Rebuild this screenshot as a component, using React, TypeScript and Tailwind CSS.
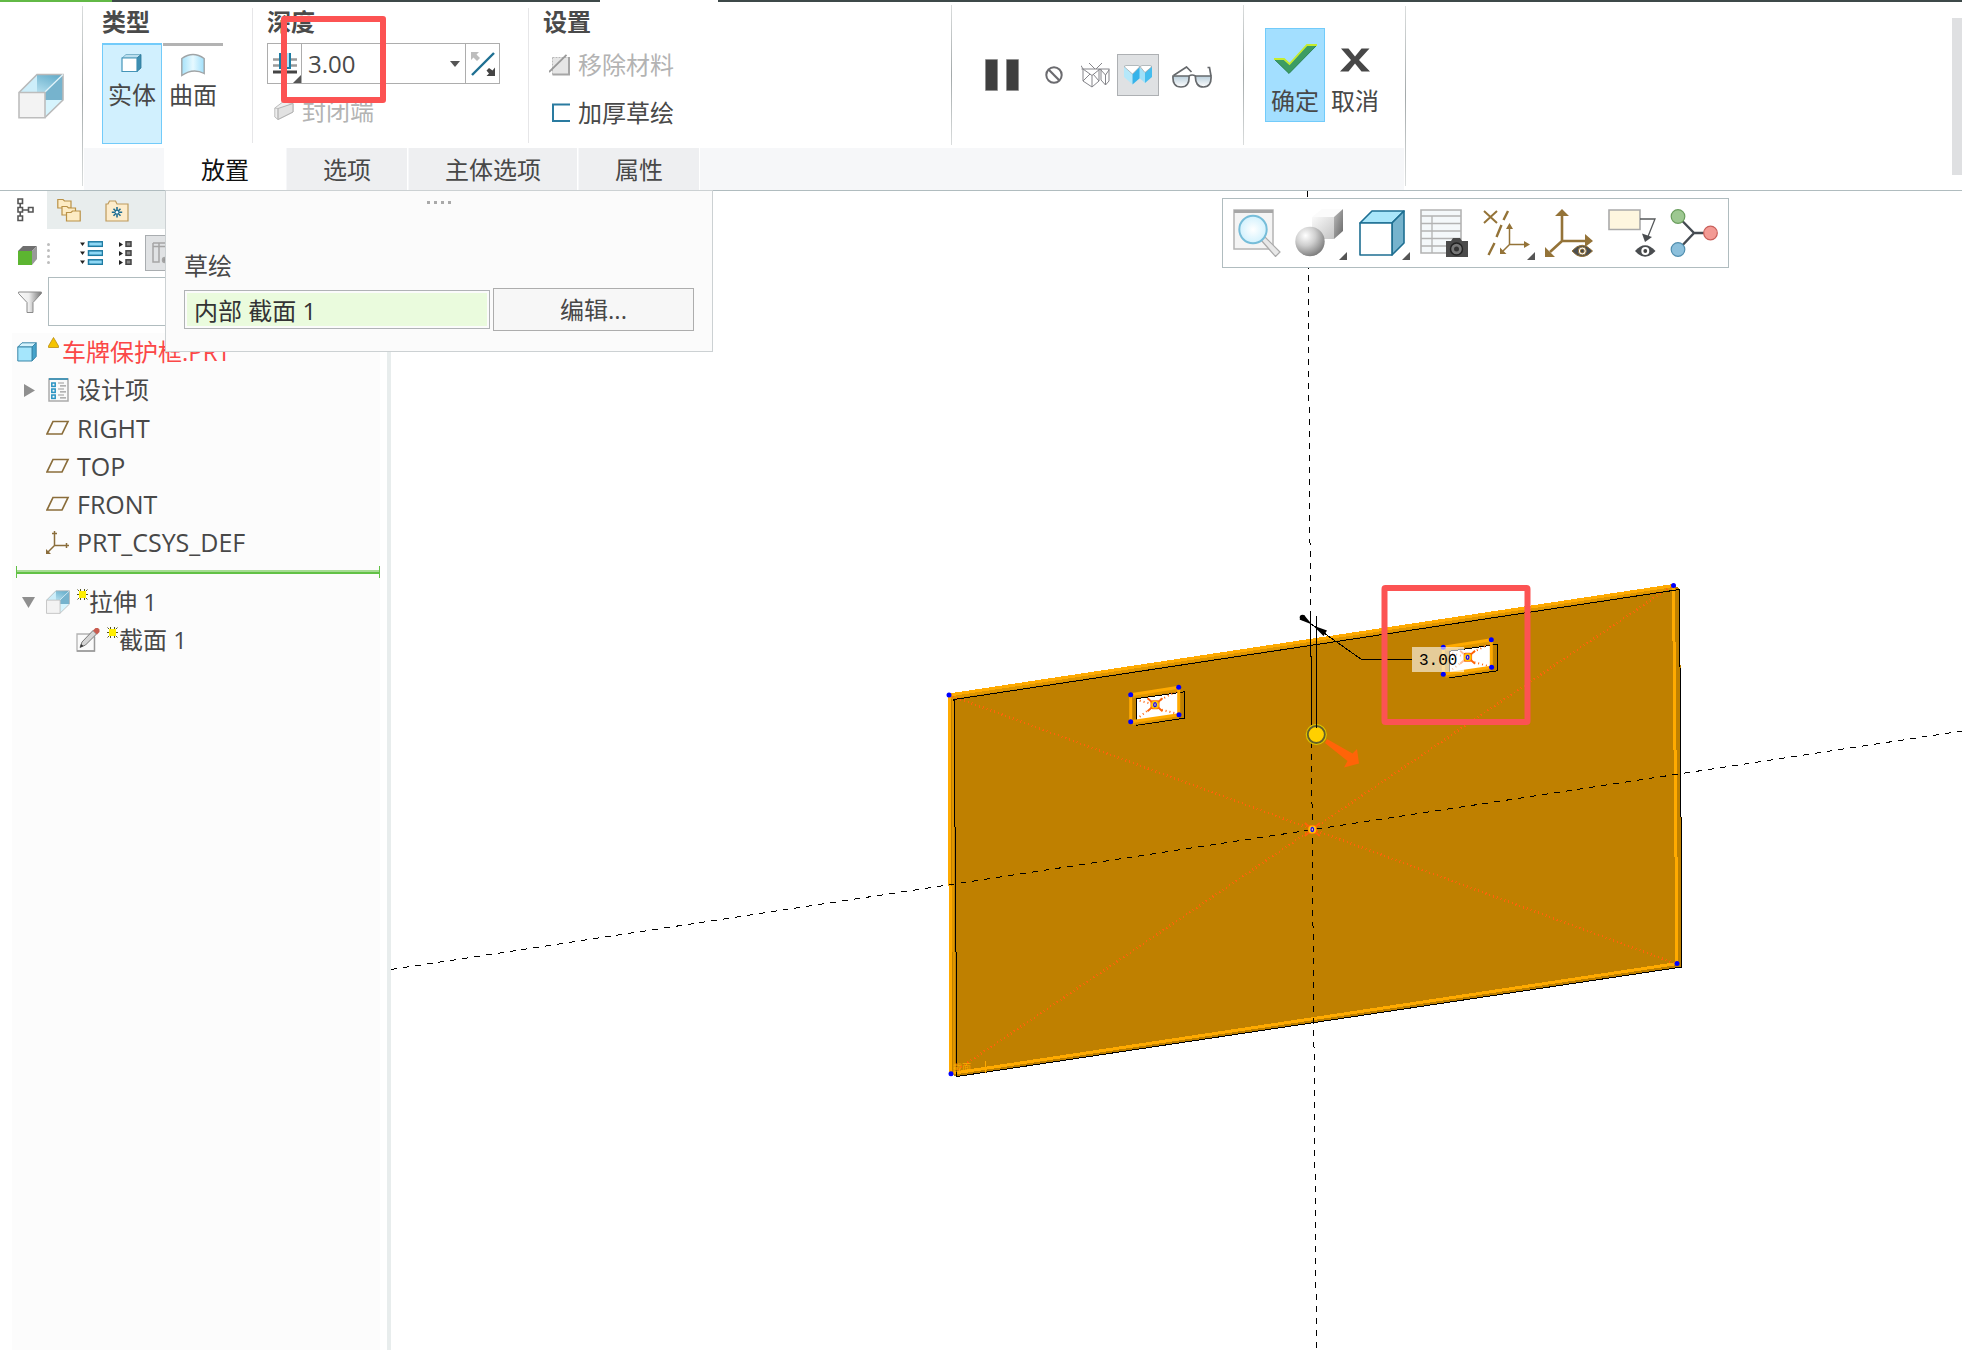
import React from "react";

type IconProps = { className?: string };

/* ---------- ribbon icons ---------- */

const ExtrudeIcon = ({ className }: IconProps) => (
  <svg className={className} viewBox="0 0 46 46" fill="none">
    <defs>
      <linearGradient id="exTop" x1="0" y1="1" x2="1" y2="0">
        <stop offset="0" stopColor="#c9ecf8" />
        <stop offset="1" stopColor="#5ba7c6" />
      </linearGradient>
    </defs>
    <path d="M1.500 19 19 1.500H45L27 19Z" fill="url(#exTop)" />
    <path d="M19 1.500V19H1.500Z" fill="#cdeefa" />
    <path d="M27 19 45 1.500V27H27Z" fill="#76b3cd" />
    <path d="M27 27H45L27 44.500Z" fill="#d6f4fd" />
    <path d="M1.500 19 19 1.500H45V27L27 44.500" stroke="#b9b9b9" strokeWidth="1.600" />
    <path d="M27 19 45 1.500" stroke="#e4f4fa" strokeWidth="1.200" />
    <path d="M1 19.500H27V44.800H1Z" fill="#f3f3f3" stroke="#bdbdbd" strokeWidth="1.600" />
  </svg>
);

const SolidIcon = () => (
  <svg className="h-5 w-6" viewBox="0 0 24 20" fill="none">
    <path d="M2 5 6 1.500H21L17 5Z" fill="#bcdfee" stroke="#6aa6c0" strokeWidth=".8" />
    <path d="M17 5 21 1.500V15L17 18.500Z" fill="#3f8fb2" stroke="#2a7697" strokeWidth=".8" />
    <path d="M2 5H17V18.500H2Z" fill="#fff" stroke="#4595b8" strokeWidth="1.200" />
  </svg>
);

const SurfaceIcon = () => (
  <svg className="h-6 w-6" viewBox="0 0 24 24" fill="none">
    <defs>
      <linearGradient id="surf" x1="0" y1="0" x2="1" y2="0">
        <stop offset="0" stopColor="#a6e2fa" />
        <stop offset="0.500" stopColor="#e6f9ff" />
        <stop offset="1" stopColor="#9fdffb" />
      </linearGradient>
    </defs>
    <path d="M.8 5.500Q12-2.500 23.200 5.500V20.500Q12 14.500.8 22.500Z" fill="url(#surf)" stroke="#a0a4a6" strokeWidth="1.400" />
  </svg>
);

const SymmetricDepthIcon = () => (
  <svg className="h-6 w-6" viewBox="0 0 24 24" fill="none">
    <path d="M0 7.500H24M0 13.500H24" stroke="#9a9a9a" strokeWidth="2.400" />
    <path d="M6 1H18V16H6Z" fill="#a8e4fb" />
    <path d="M7 1V16H17V1" stroke="#1c7ca3" strokeWidth="2" />
    <path d="M0 20H24" stroke="#444" strokeWidth="3" />
  </svg>
);

const FlipIcon = () => (
  <svg className="h-6 w-6" viewBox="0 0 24 24" fill="none">
    <path d="M1 23 23 1" stroke="#1e6f92" strokeWidth="2.400" />
    <path d="M0 0H8L5.500 2.500 9 6 6 9 2.500 5.500 0 8Z" fill="#bdbdbd" />
    <path d="M24 24H15.500L18 21.500 15.500 18.500 18 16 21.500 18.500 24 15.500Z" fill="#444" />
  </svg>
);

const CapIcon = () => (
  <svg className="h-5 w-5" viewBox="0 0 20 20" fill="none" stroke="#bdbdbd">
    <path d="M.8 7 9 .8 19 2.500V11L4 18.500.8 16Z" fill="#eee" />
    <path d="M4 7.500 19 2.500V11L4 18.500Z" fill="#e2e2e2" stroke="#b3b3b3" />
    <path d="M.8 7 4 7.500V18.500" />
  </svg>
);

const RemoveMaterialIcon = () => (
  <svg className="h-[22px] w-[22px]" viewBox="0 0 22 22" fill="none">
    <path d="M3.500 3.500H20.500V20.500H3.500Z" fill="#e6e6e6" stroke="#b9b9b9" strokeDasharray="2 1" />
    <path d="M20 3V20.500H3.500" stroke="#a6a6a6" strokeWidth="2" />
    <path d="M0 18 17.500.8" stroke="#999" strokeWidth="1.800" />
  </svg>
);

const ThickenIcon = () => (
  <svg className="h-[22px] w-[22px]" viewBox="0 0 22 22" fill="none">
    <path d="M21 2.500H4V19H21" stroke="#2a7ba0" strokeWidth="2" />
  </svg>
);

const PauseIcon = () => (
  <svg className="h-8 w-[34px]" viewBox="0 0 34 32">
    <path d="M.5.5H12.500V31.500H.5ZM21.500.5H33.500V31.500H21.500Z" fill="#3f3f3f" stroke="#8a8a8a" strokeWidth=".6" />
  </svg>
);

const NoPreviewIcon = () => (
  <svg className="h-[18px] w-[18px]" viewBox="0 0 18 18" fill="none" stroke="#6b6b6f">
    <circle cx="9" cy="9" r="7.700" strokeWidth="2" />
    <path d="M3.800 3.800 14.200 14.200" strokeWidth="2.200" />
  </svg>
);

const WireIcon = () => (
  <svg className="h-[25px] w-[29px]" viewBox="0 0 29 25" fill="none" stroke="#85858a" strokeWidth="1">
    <path d="M.5 6H28.500M2 6V18L11 24 18 18M28 6V18L24.500 22 20 17M2 6 11 12.500 19 6M19 6 24.500 12 28 7M11 12.500V24M18 6V18M24.500 12V22M20 6V17M8 0 14 6M21 0 15 6M0 2.500 2 6M2 18 9 11M18 18 12 11" />
  </svg>
);

const ShadedIcon = () => (
  <svg className="h-5 w-[28px]" viewBox="0 0 28 20">
    <path d="M0 1V12L8.500 19.500V9Z" fill="#b5e8fa" />
    <path d="M8.500 9 16 1V13L8.500 19.500Z" fill="#35b3ea" />
    <path d="M15.500 2V13L21 18V7Z" fill="#9fe0f8" />
    <path d="M21 7 28 1V12L21 18Z" fill="#45bdee" />
    <path d="M0 1.500 2 .5H14L16 1.500 8.500 9ZM16 1.500 18 .5H26L28 1.500 21 7.500Z" fill="#fff" stroke="#9aa2a6" strokeWidth=".7" />
  </svg>
);

const GlassesIcon = () => (
  <svg className="h-[22px] w-10" viewBox="0 0 40 22" fill="none" stroke="#66696c" strokeWidth="1.700">
    <defs>
      <linearGradient id="lens" x1="0" y1="0" x2="0" y2="1">
        <stop offset="0" stopColor="#b9cedb" />
        <stop offset="1" stopColor="#fff" />
      </linearGradient>
    </defs>
    <path d="M1 10H17C17.500 17 15 21 9 21S.5 17 1 10ZM23.500 10H39C39.500 17 37 21 31.500 21S23 17 23.500 10Z" fill="url(#lens)" />
    <path d="M17 10Q20 8 23.500 10M1.500 9.500 14.500 1 19.500 6M39 10 37.500 1.500H35.500" />
  </svg>
);

const CheckIcon = () => (
  <svg className="h-[30px] w-[43px]" viewBox="0 0 43 30">
    <path d="M0 15H10L15.500 20 33 1H43L15 29.500Z" fill="#3c9c63" stroke="#1f7a45" strokeWidth=".8" />
    <path d="M0 15H10L15.500 20 33 1H43" fill="none" stroke="#c6ec2f" strokeWidth="1.800" />
  </svg>
);

const CrossIcon = () => (
  <svg className="h-6 w-[30px]" viewBox="0 0 30 24">
    <path d="M1 .5H8.500L15 8.500 21.500.5H29.500L19 12 30 23.500H21.500L15 15.500 8.500 23.500H0L11 12Z" fill="#474747" />
  </svg>
);

const Corner = ({ className }: IconProps) => (
  <svg className={className} viewBox="0 0 8 8">
    <path d="M8 0V8H0Z" fill="#555" />
  </svg>
);

/* ---------- model tree icons ---------- */

const TreeTabIcon = () => (
  <svg className="h-6 w-[17px]" viewBox="0 0 17 24" fill="none" stroke="#555" strokeWidth="1.600">
    <path d="M1 1H5.500V5.500H1ZM1 9.500H5.500V14H1ZM1 18H5.500V22.500H1ZM11.500 9.500H16V14H11.500ZM3.200 5.500V9.500M3.200 14V18M5.500 12H11.500" />
  </svg>
);

const FoldersIcon = () => (
  <svg className="h-6 w-6" viewBox="0 0 24 24" fill="#fdecc4" stroke="#b99146" strokeWidth="1.200">
    <path d="M.8 10V1.500H6L7.500 3H14V10Z" />
    <path d="M5 17V8.500H10L11.500 10H18.500V17Z" />
    <path d="M9.500 23V14.500H14L15.500 13H23.200V23Z" />
  </svg>
);

const FavoritesIcon = () => (
  <svg className="h-[22px] w-6" viewBox="0 0 24 22" fill="none">
    <path d="M1 21V4H3L4.500 1H10.500L12 4H23V21Z" fill="#fdeccb" stroke="#bd9a5c" strokeWidth="1.200" />
    <path d="M12 7V17.500M6.800 12.200H17.200M8.500 8.700 15.500 15.700M15.500 8.700 8.500 15.700" stroke="#1e6d92" strokeWidth="1.600" />
    <circle cx="12" cy="12.200" r="1.300" fill="#fff" />
  </svg>
);

const GreenCubeIcon = () => (
  <svg className="h-5 w-[19px]" viewBox="0 0 19 20">
    <path d="M0 6 5 1H19L14 6Z" fill="#6f6f6f" />
    <path d="M14 6 19 1V14L14 20Z" fill="#999" />
    <path d="M0 6H14V20H0Z" fill="#5cb531" />
  </svg>
);

const ExpandListIcon = () => (
  <svg className="h-6 w-[23px]" viewBox="0 0 23 24">
    {[0, 9, 18].map((y) => (
      <g key={y}>
        <path d={`M0 ${y + 1.5}H5L2.500 ${y + 5}Z`} fill="#222" />
        <rect x="8.500" y={y + 0.8} width="14" height="4.500" fill="#8fd8f5" stroke="#1e7ba2" strokeWidth="1.500" />
      </g>
    ))}
  </svg>
);

const CollapseListIcon = () => (
  <svg className="h-6 w-[13px]" viewBox="0 0 13 24">
    {[0, 9, 18].map((y) => (
      <g key={y}>
        <path d={`M0 ${y + 1}V${y + 6}L4 ${y + 3.5}Z`} fill="#222" />
        <rect x="7" y={y + 0.8} width="5" height="4.500" fill="#8a8a8a" stroke="#444" strokeWidth="1.500" />
      </g>
    ))}
  </svg>
);

const ColumnsIcon = () => (
  <svg className="h-6 w-6" viewBox="0 0 24 24" fill="none" stroke="#a5a5a5" strokeWidth="1.500">
    <path d="M1 2H23M1 5.500H23M1 2V21H7V2M15 2V12" />
    <circle cx="13" cy="19" r="2.500" fill="#999" />
  </svg>
);

const FilterIcon = () => (
  <svg className="h-[22px] w-6" viewBox="0 0 24 22">
    <defs>
      <linearGradient id="funnel" x1="0" y1="0" x2="1" y2="0">
        <stop offset="0" stopColor="#f7f7f7" />
        <stop offset="0.450" stopColor="#eee" />
        <stop offset="1" stopColor="#777" />
      </linearGradient>
    </defs>
    <path d="M.6 1H23.400V2.500L15 11.500V21.500H9V11.500L.6 2.500Z" fill="url(#funnel)" stroke="#8b8b8b" />
  </svg>
);

const PartIcon = () => (
  <svg className="h-5 w-5" viewBox="0 0 20 20" stroke="#3a87a9" strokeWidth="1" strokeLinejoin="round">
    <path d="M.8 5 5 .8H19.200L15 5Z" fill="#d5f3fd" />
    <path d="M15 5 19.200.8V14.500L15 19Z" fill="#45a3cb" />
    <path d="M.8 5H15V19H.8Z" fill="#a5e6fc" />
  </svg>
);

const WarningIcon = () => (
  <svg className="h-[11px] w-[11px]" viewBox="0 0 11 11">
    <path d="M5.500.5 10.500 9V10.500H.5V9Z" fill="#f5c400" stroke="#b98c10" strokeWidth=".8" />
  </svg>
);

const DesignItemsIcon = () => (
  <svg className="h-6 w-[21px]" viewBox="0 0 21 24" fill="none">
    <path d="M1 1H20V23H1Z" fill="#fafafa" stroke="#aaa" strokeWidth="1.500" />
    <path d="M1 1H20" stroke="#2f8cb4" strokeWidth="1.600" />
    {[5, 11, 17].map((y) => (
      <g key={y}>
        <rect x="3.800" y={y} width="3.400" height="3.400" stroke="#2a93c2" strokeWidth="1.500" />
        <path d={`M10 ${y}H16M12 ${y + 2.8}H18`} stroke="#999" strokeWidth="1.200" />
      </g>
    ))}
  </svg>
);

const PlaneIcon = () => (
  <svg className="h-4 w-6" viewBox="0 0 24 16" fill="none">
    <path d="M7 1.500H22L16 14H1Z" stroke="#8a6d3b" strokeWidth="1.700" />
  </svg>
);

const CsysIcon = () => (
  <svg className="h-6 w-6" viewBox="0 0 24 24" fill="none" stroke="#8a6d3b" strokeWidth="1.500">
    <path d="M8.500 1V15.500H23M8.500 15.500 1 23M6 3.500H11M20.500 13V18" />
    <path d="M0 19V24H5Z" fill="#8a6d3b" stroke="none" />
  </svg>
);

const SketchIcon = () => (
  <svg className="h-6 w-6" viewBox="0 0 24 24" fill="none">
    <path d="M1 6H18.500V23H1Z" fill="#fafafa" stroke="#b2b2b2" strokeWidth="1.300" />
    <path d="M18.500 9V23H1" stroke="#999" strokeWidth="1.300" />
    <path d="M4 19.500 6 14 17 2.500 20.500 6 9.500 17Z" fill="#d5d5d5" stroke="#777" strokeWidth="1" />
    <path d="M17 2.500 19.500 0H22L23.500 1.500V4L21 6.500Z" fill="#c85c50" />
    <path d="M4 19.500 5 16 7.500 18Z" fill="#333" />
  </svg>
);

const NewStar = () => (
  <svg className="h-[11px] w-[11px]" viewBox="0 0 11 11" fill="none">
    <path d="M3.500 0V2M7.500 0V2M3.500 9V11M7.500 9V11M0 5.500H11M.5.5 10.500 10.500M10.500.5.5 10.500" stroke="#55551c" strokeWidth="1" />
    <rect x="2" y="2" width="7" height="7" fill="#ffee00" />
  </svg>
);

/* ---------- graphics toolbar icons ---------- */

const Eye = () => (
  <g>
    <path d="M27 42Q37 30.500 47.500 42Q37 53.500 27 42Z" fill="#4a4d50" />
    <circle cx="37.300" cy="42" r="4" fill="#fff" />
    <circle cx="37.300" cy="42" r="1.900" fill="#444" />
  </g>
);

const RefitIcon = () => (
  <svg className="size-12" viewBox="0 0 48 48" fill="none">
    <defs>
      <radialGradient id="glass">
        <stop offset="0" stopColor="#fff" />
        <stop offset="1" stopColor="#d2f1fd" />
      </radialGradient>
    </defs>
    <path d="M1 1H40V40H1Z" fill="#f4f4f4" stroke="#b4b4b4" strokeWidth="1.500" />
    <path d="M1 2.500H40" stroke="#a6a6a6" strokeWidth="3" />
    <path d="M28 31 32 28 47 43 42.500 47.500Z" fill="#e8e8e8" stroke="#aaa" strokeWidth="1.200" />
    <circle cx="20" cy="20.500" r="13.700" fill="url(#glass)" stroke="#76bdd9" strokeWidth="2" />
  </svg>
);

const ShadingIcon = () => (
  <svg className="size-12" viewBox="0 0 48 48">
    <defs>
      <radialGradient id="ball" cx=".35" cy=".3" r=".75">
        <stop offset="0" stopColor="#fff" />
        <stop offset=".45" stopColor="#cfcfcf" />
        <stop offset="1" stopColor="#7a7a7a" />
      </radialGradient>
      <linearGradient id="front" x1="0" y1="0" x2="1" y2="1">
        <stop offset="0" stopColor="#fafafa" />
        <stop offset="1" stopColor="#c4c4c4" />
      </linearGradient>
      <linearGradient id="side" x1="0" y1="0" x2="1" y2="1">
        <stop offset="0" stopColor="#bbb" />
        <stop offset="1" stopColor="#666" />
      </linearGradient>
    </defs>
    <path d="M17 8H39L48 0H27Z" fill="#fbfbfb" />
    <path d="M17 8H39V30H17Z" fill="url(#front)" />
    <path d="M39 8 48 0V22L39 30Z" fill="url(#side)" />
    <circle cx="15" cy="32.500" r="14.700" fill="url(#ball)" />
  </svg>
);

const DisplayStyleIcon = () => (
  <svg className="size-12" viewBox="0 0 48 48" stroke="#1e6f92" strokeWidth="1.600" strokeLinejoin="round">
    <path d="M2 14 14 2H46L34 14Z" fill="#a9e6fa" />
    <path d="M34 14 46 2V34L34 46Z" fill="#76b3cd" />
    <path d="M2 14H34V46H2Z" fill="#fff" />
  </svg>
);

const SavedViewsIcon = () => (
  <svg className="size-12" viewBox="0 0 48 48" fill="none">
    <path d="M1 1H41V44H1Z" fill="#f4f8fa" stroke="#b3b3b3" strokeWidth="1.600" />
    <path d="M1 7H41M1 14.500H41M1 22H41M1 29.500H41M1 37H41M12 7V44" stroke="#b3b3b3" strokeWidth="1.300" />
    <path d="M26 32H31L33 29H40L42 32H48V48H26Z" fill="#4a4a4a" />
    <circle cx="36.500" cy="40" r="6" fill="#777" stroke="#222" strokeWidth="1.500" />
    <circle cx="36.500" cy="40" r="2.500" fill="#333" />
  </svg>
);

const DatumFilterIcon = () => (
  <svg className="size-12" viewBox="0 0 48 48" fill="none" stroke="#947338">
    <path d="M1 2 14 14M14 2 1 14" strokeWidth="2" />
    <path d="M25 2 20.500 11M18.500 16 13.500 28M11.500 34 5.500 46" strokeWidth="2.400" />
    <path d="M26.500 18V35.500H42M26.500 35.500 20 42" strokeWidth="1.500" />
    <path d="M26.500 14 30 20H23ZM47 35.500 41 32V39ZM17 45V38.500L23.500 45Z" fill="#947338" stroke="none" />
  </svg>
);

const CsysViewIcon = () => (
  <svg className="size-12" viewBox="0 0 48 48" fill="none" stroke="#947338">
    <path d="M17 5V32H42M17 32 5 43" strokeWidth="2.600" />
    <path d="M17 0 24 7H10ZM48 32 40 25V38ZM0 48V38L10 48Z" fill="#947338" stroke="none" />
    <Eye />
  </svg>
);

const AnnotationIcon = () => (
  <svg className="size-12" viewBox="0 0 48 48" fill="none">
    <path d="M1 1H32V20.500H1Z" fill="#fef6df" stroke="#aaa" strokeWidth="1.600" />
    <path d="M32 10H47L39 30" stroke="#55585a" strokeWidth="1.300" />
    <path d="M34 24.500 44 28 37 33Z" fill="#4a4d50" />
    <Eye />
  </svg>
);

const SpinCenterIcon = () => (
  <svg className="size-12" viewBox="0 0 48 48" fill="none">
    <path d="M8 7.500 24 24 8 41M24 24H40" stroke="#454b52" strokeWidth="2.400" />
    <circle cx="8" cy="7.500" r="6.800" fill="#9dc891" stroke="#699d5c" strokeWidth="1.200" />
    <circle cx="8" cy="40.500" r="6.800" fill="#8cc0dc" stroke="#4f8dae" strokeWidth="1.200" />
    <circle cx="40.500" cy="24" r="6.800" fill="#f39a94" stroke="#c95f5a" strokeWidth="1.200" />
  </svg>
);

/* ---------- shared pieces ---------- */

const Separator = ({ className }: IconProps) => (
  <div className={`w-px shrink-0 bg-linear-to-b from-[#dadddd] via-[#a3a9aa] to-[#dadddd] ${className}`} />
);

const Heading = ({ children }: { children: React.ReactNode }) => (
  <h2 className="mb-1 pt-1 pb-px text-2xl leading-8 font-bold text-[#4a4a4a]">{children}</h2>
);

const panels = ["选项", "主体选项", "属性"];

function Ribbon() {
  return (
    <header className="relative z-20 border-b border-[#b0bcbf] bg-white">
      <div className="flex h-[2px]">
        <div className="w-28 bg-[#62b946]" />
        <div className="w-[488px] bg-[#3d4949]" />
        <div className="w-[118px]" />
        <div className="flex-1 bg-[#3d4949]" />
      </div>
      <div className="flex">
        <div className="flex w-[82px] shrink-0 items-center justify-center">
          <ExtrudeIcon className="size-[46px]" />
        </div>
        <Separator className="my-1" />
        <div className="mx-px shrink-0">
          <div className="flex h-[146px]">
            <section className="w-[168px] pl-[18px]">
              <Heading>类型</Heading>
              <div className="flex gap-px">
                <button className="flex h-[101px] w-[60px] flex-col items-center border border-t-2 border-[#72cbfa] bg-[#d1f0fe] pt-2">
                  <SolidIcon />
                  <span className="mt-[6px] text-2xl leading-8">实体</span>
                </button>
                <button className="flex h-[101px] w-[60px] flex-col items-center border-t-3 border-[#b3b3b3] pt-[7px]">
                  <SurfaceIcon />
                  <span className="mt-[2px] text-2xl leading-8">曲面</span>
                </button>
              </div>
            </section>
            <div className="mt-[6px] h-[135px] w-px bg-[#e6e6e8]" />
            <section className="relative w-[275px] pl-[14px]">
              <Heading>深度</Heading>
              <div className="flex h-[41px] w-[233px] border border-[#adadad] text-[#4a4a4a]">
                <button aria-label="深度类型" className="relative flex w-[34px] items-center justify-center border-r border-[#adadad]">
                  <SymmetricDepthIcon />
                  <Corner className="absolute right-0 bottom-0 size-2" />
                </button>
                <input aria-label="深度值" defaultValue="3.00" className="min-w-0 flex-1 pl-[6px] text-2xl outline-none" />
                <button aria-label="最近使用的值" className="flex w-5 items-center justify-center">
                  <svg className="h-[6px] w-[10px]" viewBox="0 0 10 6">
                    <path d="M0 0H10L5 6Z" fill="#555" />
                  </svg>
                </button>
                <button aria-label="反向" className="flex w-[34px] items-center justify-center border-l border-[#adadad]">
                  <FlipIcon />
                </button>
              </div>
              <button disabled className="mt-[11px] ml-[7px] flex h-8 items-center gap-2 text-2xl leading-8 text-[#b3b3b3]">
                <CapIcon />
                封闭端
              </button>
              <div className="pointer-events-none absolute top-[14px] left-[28px] h-[87px] w-[105px] rounded-[3px] border-6 border-[#fc5353]" />
            </section>
            <div className="mt-[6px] h-[135px] w-px bg-[#e6e6e8]" />
            <section className="w-[422px] pl-[14px]">
              <Heading>设置</Heading>
              <div className="mt-[10px] flex flex-col items-start gap-4 pl-[6px] text-2xl leading-8">
                <button disabled className="flex items-center gap-[7px] text-[#b3b3b3]">
                  <RemoveMaterialIcon />
                  移除材料
                </button>
                <button className="flex items-center gap-[7px]">
                  <ThickenIcon />
                  加厚草绘
                </button>
              </div>
            </section>
            <Separator className="my-[3px]" />
            <section className="flex w-[291px] items-center pl-[33px]">
              <button aria-label="暂停">
                <PauseIcon />
              </button>
              <button aria-label="无预览" className="ml-[26px]">
                <NoPreviewIcon />
              </button>
              <button aria-label="未连接" className="ml-[18px]">
                <WireIcon />
              </button>
              <button aria-label="已连接" className="ml-[7px] flex size-[42px] items-center justify-center border border-[#adb0b3] bg-[#dfe1e3]">
                <ShadedIcon />
              </button>
              <button aria-label="特征预览" className="ml-[13px] pt-1">
                <GlassesIcon />
              </button>
            </section>
            <Separator className="my-[3px]" />
            <section className="flex w-40 pt-[26px] pl-[21px] text-2xl leading-8">
              <button className="flex h-[94px] w-[60px] flex-col items-center border border-[#72cbfa] bg-[#a3dfff] pt-[15px]">
                <CheckIcon />
                <span className="mt-[11px]">确定</span>
              </button>
              <button className="flex h-[94px] w-[60px] flex-col items-center pt-5">
                <CrossIcon />
                <span className="mt-[13px]">取消</span>
              </button>
            </section>
          </div>
          <nav className="flex h-[42px] gap-px bg-[#f6f7f9] pl-20 text-2xl">
            <button className="w-[122px] bg-white pt-[2px] text-[#111]">放置</button>
            {panels.map((label) => (
              <button key={label} className="border-r border-white bg-[#eeeff1] px-9 pt-[2px]">
                {label}
              </button>
            ))}
          </nav>
        </div>
        <Separator className="my-1" />
        <div className="mt-4 ml-auto h-[157px] w-[10px] bg-[#dfe0e2]" />
      </div>
      <PlacementPanel />
    </header>
  );
}

function PlacementPanel() {
  return (
    <div className="absolute top-full left-[165px] w-[548px] border border-[#ccd1d3] bg-[#fbfbfb] px-[18px] pb-5">
      <div className="flex h-[59px] justify-center gap-1 pt-[10px]">
        {[0, 1, 2, 3].map((dot) => (
          <span key={dot} className="size-[3px] bg-[#a9a9a9]" />
        ))}
      </div>
      <label htmlFor="sketch" className="block text-2xl leading-8">
        草绘
      </label>
      <div className="mt-[6px] flex items-center gap-[3px] text-2xl">
        <input
          id="sketch"
          readOnly
          value="内部 截面 1"
          className="h-[39px] min-w-0 flex-1 border border-[#b0b3b5] bg-[#eafbdd] bg-clip-content p-[2px] indent-[7px] text-[#333] outline-none"
        />
        <button className="h-[43px] w-[201px] border border-[#adadad] bg-[#f7f7f7]">编辑...</button>
      </div>
    </div>
  );
}

const planes = ["RIGHT", "TOP", "FRONT"];

function ModelTree() {
  return (
    <aside className="flex w-[391px] shrink-0 flex-col border-r-4 border-[#e8eded] bg-white">
      <div className="flex h-[38px] items-center bg-[#e8eded]">
        <button aria-label="模型树" className="flex h-full w-[47px] items-center bg-white pl-[17px]">
          <TreeTabIcon />
        </button>
        <button aria-label="文件夹浏览器" className="ml-[10px]">
          <FoldersIcon />
        </button>
        <button aria-label="收藏夹" className="ml-6 pt-[2px]">
          <FavoritesIcon />
        </button>
      </div>
      <div className="flex h-12 items-center pl-[18px]">
        <button aria-label="模型" className="pt-1">
          <GreenCubeIcon />
        </button>
        <div className="ml-[10px] flex flex-col gap-[3px]">
          {[0, 1, 2, 3].map((dot) => (
            <span key={dot} className="size-[3px] rounded-full bg-[#bdbdbd]" />
          ))}
        </div>
        <button aria-label="全部展开" className="ml-[30px]">
          <ExpandListIcon />
        </button>
        <button aria-label="全部折叠" className="ml-4">
          <CollapseListIcon />
        </button>
        <button aria-label="树列" className="ml-[13px] flex h-9 w-10 items-center border border-[#a9adb0] bg-[#e0e2e4] pl-[6px]">
          <ColumnsIcon />
        </button>
      </div>
      <div className="flex h-[49px] items-center pr-2 pl-[18px]">
        <FilterIcon />
        <input aria-label="筛选" className="ml-[6px] h-full min-w-0 flex-1 border border-[#b0bcbf] px-2 text-2xl outline-none" />
      </div>
      <ul className="mt-[7px] mr-[7px] ml-3 flex-1 bg-[#fcfcfc] text-2xl leading-[38px] whitespace-nowrap">
        <li className="flex h-[38px] items-center pl-[5px] text-[#fb4747]">
          <PartIcon />
          <span className="mb-5 ml-[11px]">
            <WarningIcon />
          </span>
          <span className="ml-[3px]">车牌保护框.PRT</span>
        </li>
        <li className="flex h-[38px] items-center pl-3">
          <svg className="h-[13px] w-[11px]" viewBox="0 0 11 13">
            <path d="M0 0 11 6.500 0 13Z" fill="#8f8f8f" />
          </svg>
          <span className="ml-[13px] w-[29px]">
            <DesignItemsIcon />
          </span>
          设计项
        </li>
        {planes.map((name) => (
          <li key={name} className="flex h-[38px] items-center pl-[34px] text-[25px]">
            <span className="w-[31px]">
              <PlaneIcon />
            </span>
            {name}
          </li>
        ))}
        <li className="flex h-[38px] items-center pl-[34px] text-[25px]">
          <span className="w-[31px]">
            <CsysIcon />
          </span>
          PRT_CSYS_DEF
        </li>
        <li aria-hidden="true" className="my-[5px] ml-1 flex h-3 items-center border-x border-[#62c146]">
          <div className="h-1 flex-1 border-t-2 border-[#a6dc93] bg-[#62c146]" />
        </li>
        <li className="flex h-[38px] items-center pl-[10px]">
          <svg className="h-[11px] w-[13px]" viewBox="0 0 13 11">
            <path d="M0 0H13L6.500 11Z" fill="#8f8f8f" />
          </svg>
          <ExtrudeIcon className="ml-[11px] size-6" />
          <span className="mb-[15px] ml-[7px]">
            <NewStar />
          </span>
          <span className="ml-px">拉伸 1</span>
        </li>
        <li className="flex h-[38px] items-center pl-16">
          <SketchIcon />
          <span className="mb-[15px] ml-[7px]">
            <NewStar />
          </span>
          <span className="ml-px">截面 1</span>
        </li>
      </ul>
    </aside>
  );
}

const views = [
  { label: "重新调整", icon: <RefitIcon />, menu: false },
  { label: "渲染选项", icon: <ShadingIcon />, menu: true },
  { label: "显示样式", icon: <DisplayStyleIcon />, menu: true },
  { label: "已保存方向", icon: <SavedViewsIcon />, menu: false },
  { label: "基准显示过滤器", icon: <DatumFilterIcon />, menu: true },
  { label: "坐标系显示", icon: <CsysViewIcon />, menu: false },
  { label: "注释显示", icon: <AnnotationIcon />, menu: false },
  { label: "旋转中心", icon: <SpinCenterIcon />, menu: false },
];

function ViewToolbar() {
  return (
    <div className="absolute top-[7px] right-[233px] flex h-[70px] w-[507px] items-center justify-between border border-[#b0bcbf] bg-white px-[10px]">
      {views.map(({ label, icon, menu }) => (
        <button key={label} aria-label={label} className="relative">
          {icon}
          {menu && <Corner className="absolute -right-1 -bottom-[3px] size-2" />}
        </button>
      ))}
    </div>
  );
}

const SketchCenter = ({ x, y }: { x: number; y: number }) => (
  <g transform={`translate(${x} ${y})`} fill="none">
    <path d="M-7.500-6.500 7.500 6.500M7.500-6.500-7.500 6.500" stroke="#ff6408" strokeWidth="1.800" />
    <rect x="-4.500" y="-4.500" width="9" height="9" rx="2" fill="#ff6408" />
    <circle r="3.200" fill="#ffc9a0" stroke="#ffc400" strokeWidth="1.600" />
    <ellipse rx="1.300" ry="2" stroke="#1a10e0" strokeWidth="1.300" />
  </g>
);

const Hole = ({ x, y }: { x: number; y: number }) => (
  <g transform={`translate(${x} ${y})`} fill="none">
    <path d="M6 4 48 -2.500V20.500L6 27Z" fill="#fff" />
    <path d="M6 4 54 -3V23.500L6 30.500Z" stroke="#000" shapeRendering="crispEdges" />
    <path d="M9 6 20 9M9 22 18 15M30 5 45-3M31 15 46 19" stroke="#ff6408" strokeWidth="2" strokeDasharray="1 3" />
    <path d="M2 1.500 48 -5.500M2 28.500 48 21.500" stroke="#df9500" strokeWidth="4" />
    <path d="M0 0 48 -7.500V20L0 27Z" stroke="#ffaa00" strokeWidth="3" />
    <g fill="#00f">
      <circle r="2.500" />
      <circle cx="48" cy="-7.500" r="2.500" />
      <circle cx="48.300" cy="20" r="2.500" />
      <circle cy="27" r="2.500" />
    </g>
    <SketchCenter x={24.3} y={10} />
  </g>
);

function Viewport() {
  return (
    <main className="relative min-w-0 flex-1 overflow-hidden">
      <svg className="block w-full" viewBox="391 191 1571 1159" fill="none">
        <g shapeRendering="crispEdges">
          <path d="M949 695 1673.500 585 1680 589 1682.500 967 957 1077 951 1074Z" fill="#bf8000" />
          <path d="M951 697.500 1674 588" stroke="#df9500" strokeWidth="3" />
          <path d="M952.500 698 954 1074" stroke="#df9500" strokeWidth="2" />
          <path d="M949 695 1677 964M951 1074 1673 585" stroke="#ff6408" strokeWidth="2.500" strokeDasharray="1 3" />
          <path d="M949 695 1673.500 585.500 1677 963.500 951 1073.500Z" stroke="#ffaa00" strokeWidth="3" />
          <path d="M954 699.500 1679.500 589.500 1682 967 957 1076.500Z" stroke="#000" />
          <path d="M985.500 1061V1073" stroke="#ffaa00" />
        </g>
        <text x="953" y="1071" fontSize="9" fill="#ffaa00">截面</text>
        <Hole x={1130.7} y={694.7} />
        <Hole x={1443.3} y={647.3} />
        <g stroke="#000" shapeRendering="crispEdges">
          <path d="M1307.500 191 1310.500 613M1311.500 742 1316.500 1350" strokeDasharray="6 6" />
          <path d="M391 969.500 1962 731" strokeDasharray="6 6" />
          <path d="M1310.500 613V656L1311.500 657V725M1316.500 616V728" />
          <path d="M1302 617.500 1361.500 659.500H1412" />
        </g>
        <path d="M1312 624.500 1304 615 1299.500 619.500ZM1313 625.500 1327 630.500 1323.500 636Z" fill="#000" />
        <circle cx="1302.500" cy="617.500" r="2.800" fill="#000" />
        <circle cx="1316.300" cy="734.500" r="10.500" fill="#dcc400" />
        <circle cx="1316.300" cy="734.500" r="8.500" fill="#ffd000" stroke="#64602a" strokeWidth="1.800" />
        <path d="M1316.500 720V728" stroke="#000" />
        <path d="M1327 739 1352.500 753.500 1357 749 1359 763.500 1344 767.500 1347.500 761 1325 743Z" fill="#ff6408" />
        <SketchCenter x={1312.3} y={829.5} />
        <g fill="#00f">
          <circle cx="949" cy="695" r="2.500" />
          <circle cx="1673.500" cy="585.500" r="2.500" />
          <circle cx="1677" cy="963.500" r="2.500" />
          <circle cx="951" cy="1073.700" r="2.500" />
        </g>
        <rect x="1412" y="647" width="52" height="25" fill="#fff" fillOpacity=".6" />
        <text x="1419" y="665" fontSize="16" fill="#000" className="font-['Liberation_Mono',monospace]">3.00</text>
        <rect x="1384.500" y="588" width="143" height="134" rx="1" stroke="#fc5353" strokeWidth="6" />
      </svg>
      <ViewToolbar />
    </main>
  );
}

export default function App() {
  return (
    <div className="flex min-h-screen flex-col overflow-x-hidden bg-white font-['Open_Sans','Noto_Sans_CJK_SC',sans-serif] text-[#484848]">
      <Ribbon />
      <div className="flex flex-1">
        <ModelTree />
        <Viewport />
      </div>
    </div>
  );
}
